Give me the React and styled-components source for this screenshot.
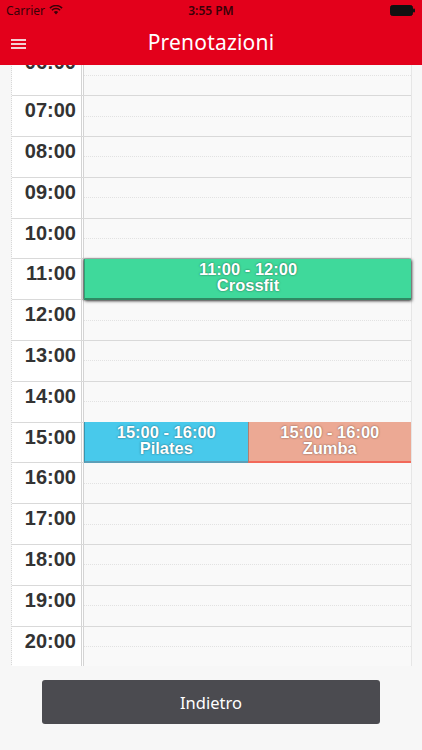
import styled, { createGlobalStyle } from 'styled-components';

const GlobalStyle = createGlobalStyle`
  html, body {
    margin: 0;
    padding: 0;
    background: #f7f7f7;
  }
  * {
    box-sizing: border-box;
  }
`;

const ROW = 40.8;
const SCROLL = 10.5;
const HOURS = [6, 7, 8, 9, 10, 11, 12, 13, 14, 15, 16, 17, 18, 19, 20, 21];

const EVENTS = [
  { hour: 11, col: 0, span: 2, time: '11:00 - 12:00', title: 'Crossfit', kind: 'green' },
  { hour: 15, col: 0, span: 1, time: '15:00 - 16:00', title: 'Pilates', kind: 'blue' },
  { hour: 15, col: 1, span: 1, time: '15:00 - 16:00', title: 'Zumba', kind: 'salmon' },
];

const palette = {
  green: { bg: '#3fd99b', bottom: '#2f8a63', shadow: '1px 1px 3px rgba(0,0,0,0.7), -1px 0 2px rgba(0,0,0,0.5)' },
  blue: { bg: '#48c9eb', bottom: '#5d9fb8', shadow: 'none' },
  salmon: { bg: '#eca994', bottom: '#f2695a', shadow: 'none' },
};

const Screen = styled.div`
  width: 422px;
  height: 750px;
  display: flex;
  flex-direction: column;
  background: #f7f7f7;
  font-family: 'Liberation Sans', Arial, sans-serif;
  overflow: hidden;
`;

const StatusBar = styled.div`
  height: 20px;
  background: #e3001b;
  display: flex;
  align-items: center;
  justify-content: space-between;
  padding: 0 6px 0 6px;
  color: #3a0008;
  font-family: 'Noto Sans', 'Liberation Sans', sans-serif;
  font-size: 12px;
  position: relative;
`;

const Carrier = styled.div`
  display: flex;
  align-items: center;
  gap: 4px;
`;

const Clock = styled.div`
  position: absolute;
  left: 0;
  right: 0;
  text-align: center;
  font-weight: 600;
  pointer-events: none;
`;

const NavBar = styled.div`
  height: 45px;
  background: #e3001b;
  display: flex;
  align-items: center;
  justify-content: center;
  position: relative;
  z-index: 2;
`;

const Title = styled.div`
  color: #fff;
  font-family: 'Noto Sans', 'Liberation Sans', sans-serif;
  font-size: 21px;
  letter-spacing: 0.2px;
  margin-top: -2px;
`;

const MenuButton = styled.div`
  position: absolute;
  left: 11px;
  top: 19px;
  width: 15px;
  display: flex;
  flex-direction: column;
  gap: 2.5px;
  span {
    display: block;
    height: 1.6px;
    background: #f4d0d4;
  }
`;

const Calendar = styled.div`
  flex: 1;
  overflow: hidden;
  padding: 0 10px 0 11px;
`;

const Grid = styled.div`
  position: relative;
  border-left: 1px dotted #d8d8d8;
  border-right: 1px solid #e6e6e6;
`;

const Row = styled.div`
  height: ${ROW}px;
  display: flex;
  border-top: 1px solid #d9d9d9;
`;

const Label = styled.div`
  width: 72px;
  background: #fff;
  border-right: 3px double #d4d4d4;
  text-align: right;
  padding-right: 5px;
  padding-top: ${(p) => (p.$clipped ? -2 : 3)}px;
  margin-top: ${(p) => (p.$clipped ? -5 : 0)}px;
  font-size: 20px;
  font-weight: bold;
  color: #333;
  overflow: hidden;
`;

const Slot = styled.div`
  flex: 1;
  background: #f9f9f9;
  display: flex;
  flex-direction: column;
  &::after {
    content: '';
    margin-top: ${ROW / 2 - 1}px;
    border-top: 1px dotted #e2e2e2;
  }
`;

const Event = styled.div`
  position: absolute;
  height: ${ROW + 1}px;
  background: ${(p) => palette[p.$kind].bg};
  border-bottom: 2px solid ${(p) => palette[p.$kind].bottom};
  box-shadow: ${(p) => palette[p.$kind].shadow};
  border-left: 1px solid rgba(0, 0, 0, 0.25);
  color: #fff;
  font-weight: bold;
  font-size: 16.5px;
  line-height: 16px;
  text-align: center;
  padding-top: 2px;
  text-shadow: 0 0 2px rgba(0, 0, 0, 0.55);
`;

const Footer = styled.div`
  height: 84px;
  background: #f7f7f7;
  display: flex;
  justify-content: center;
  padding-top: 14px;
`;

const BackButton = styled.button`
  width: 338px;
  height: 44px;
  border: none;
  border-radius: 3px;
  background: #4b4b50;
  color: #fff;
  font-family: 'Noto Sans', 'Liberation Sans', sans-serif;
  font-size: 16.5px;
  cursor: pointer;
`;

function Wifi() {
  return (
    <svg width="14" height="10" viewBox="0 0 14 10">
      <path d="M7 9.5 L4.8 7.1 A3.2 3.2 0 0 1 9.2 7.1 Z" fill="#3a0008" />
      <path d="M2.9 5.2 A5.8 5.8 0 0 1 11.1 5.2" stroke="#3a0008" strokeWidth="1.6" fill="none" />
      <path d="M0.9 3.1 A8.6 8.6 0 0 1 13.1 3.1" stroke="#3a0008" strokeWidth="1.6" fill="none" />
    </svg>
  );
}

function Battery() {
  return (
    <svg width="26" height="11" viewBox="0 0 26 11">
      <rect x="0.5" y="0.5" width="22" height="10" rx="2" fill="#111" stroke="#111" />
      <rect x="23" y="3.5" width="2" height="4" rx="1" fill="#111" />
    </svg>
  );
}

const pad = (h) => (h < 10 ? '0' + h : '' + h) + ':00';

export default function App() {
  const labelW = 72;
  const contentW = 399 - labelW;
  return (
    <Screen>
      <GlobalStyle />
      <StatusBar>
        <Carrier>
          Carrier <Wifi />
        </Carrier>
        <Clock>3:55 PM</Clock>
        <Battery />
      </StatusBar>
      <NavBar>
        <MenuButton>
          <span />
          <span />
          <span />
        </MenuButton>
        <Title>Prenotazioni</Title>
      </NavBar>
      <Calendar>
        <Grid style={{ marginTop: -SCROLL }}>
          {HOURS.map((h, i) => (
            <Row key={h}>
              <Label $clipped={i === 0}>{pad(h)}</Label>
              <Slot />
            </Row>
          ))}
          {EVENTS.map((e) => (
            <Event
              key={e.title}
              $kind={e.kind}
              style={{
                top: (e.hour - HOURS[0]) * ROW,
                left: labelW + (e.col * contentW) / 2,
                width: (e.span * contentW) / 2,
              }}
            >
              <div>{e.time}</div>
              <div>{e.title}</div>
            </Event>
          ))}
        </Grid>
      </Calendar>
      <Footer>
        <BackButton>Indietro</BackButton>
      </Footer>
    </Screen>
  );
}
